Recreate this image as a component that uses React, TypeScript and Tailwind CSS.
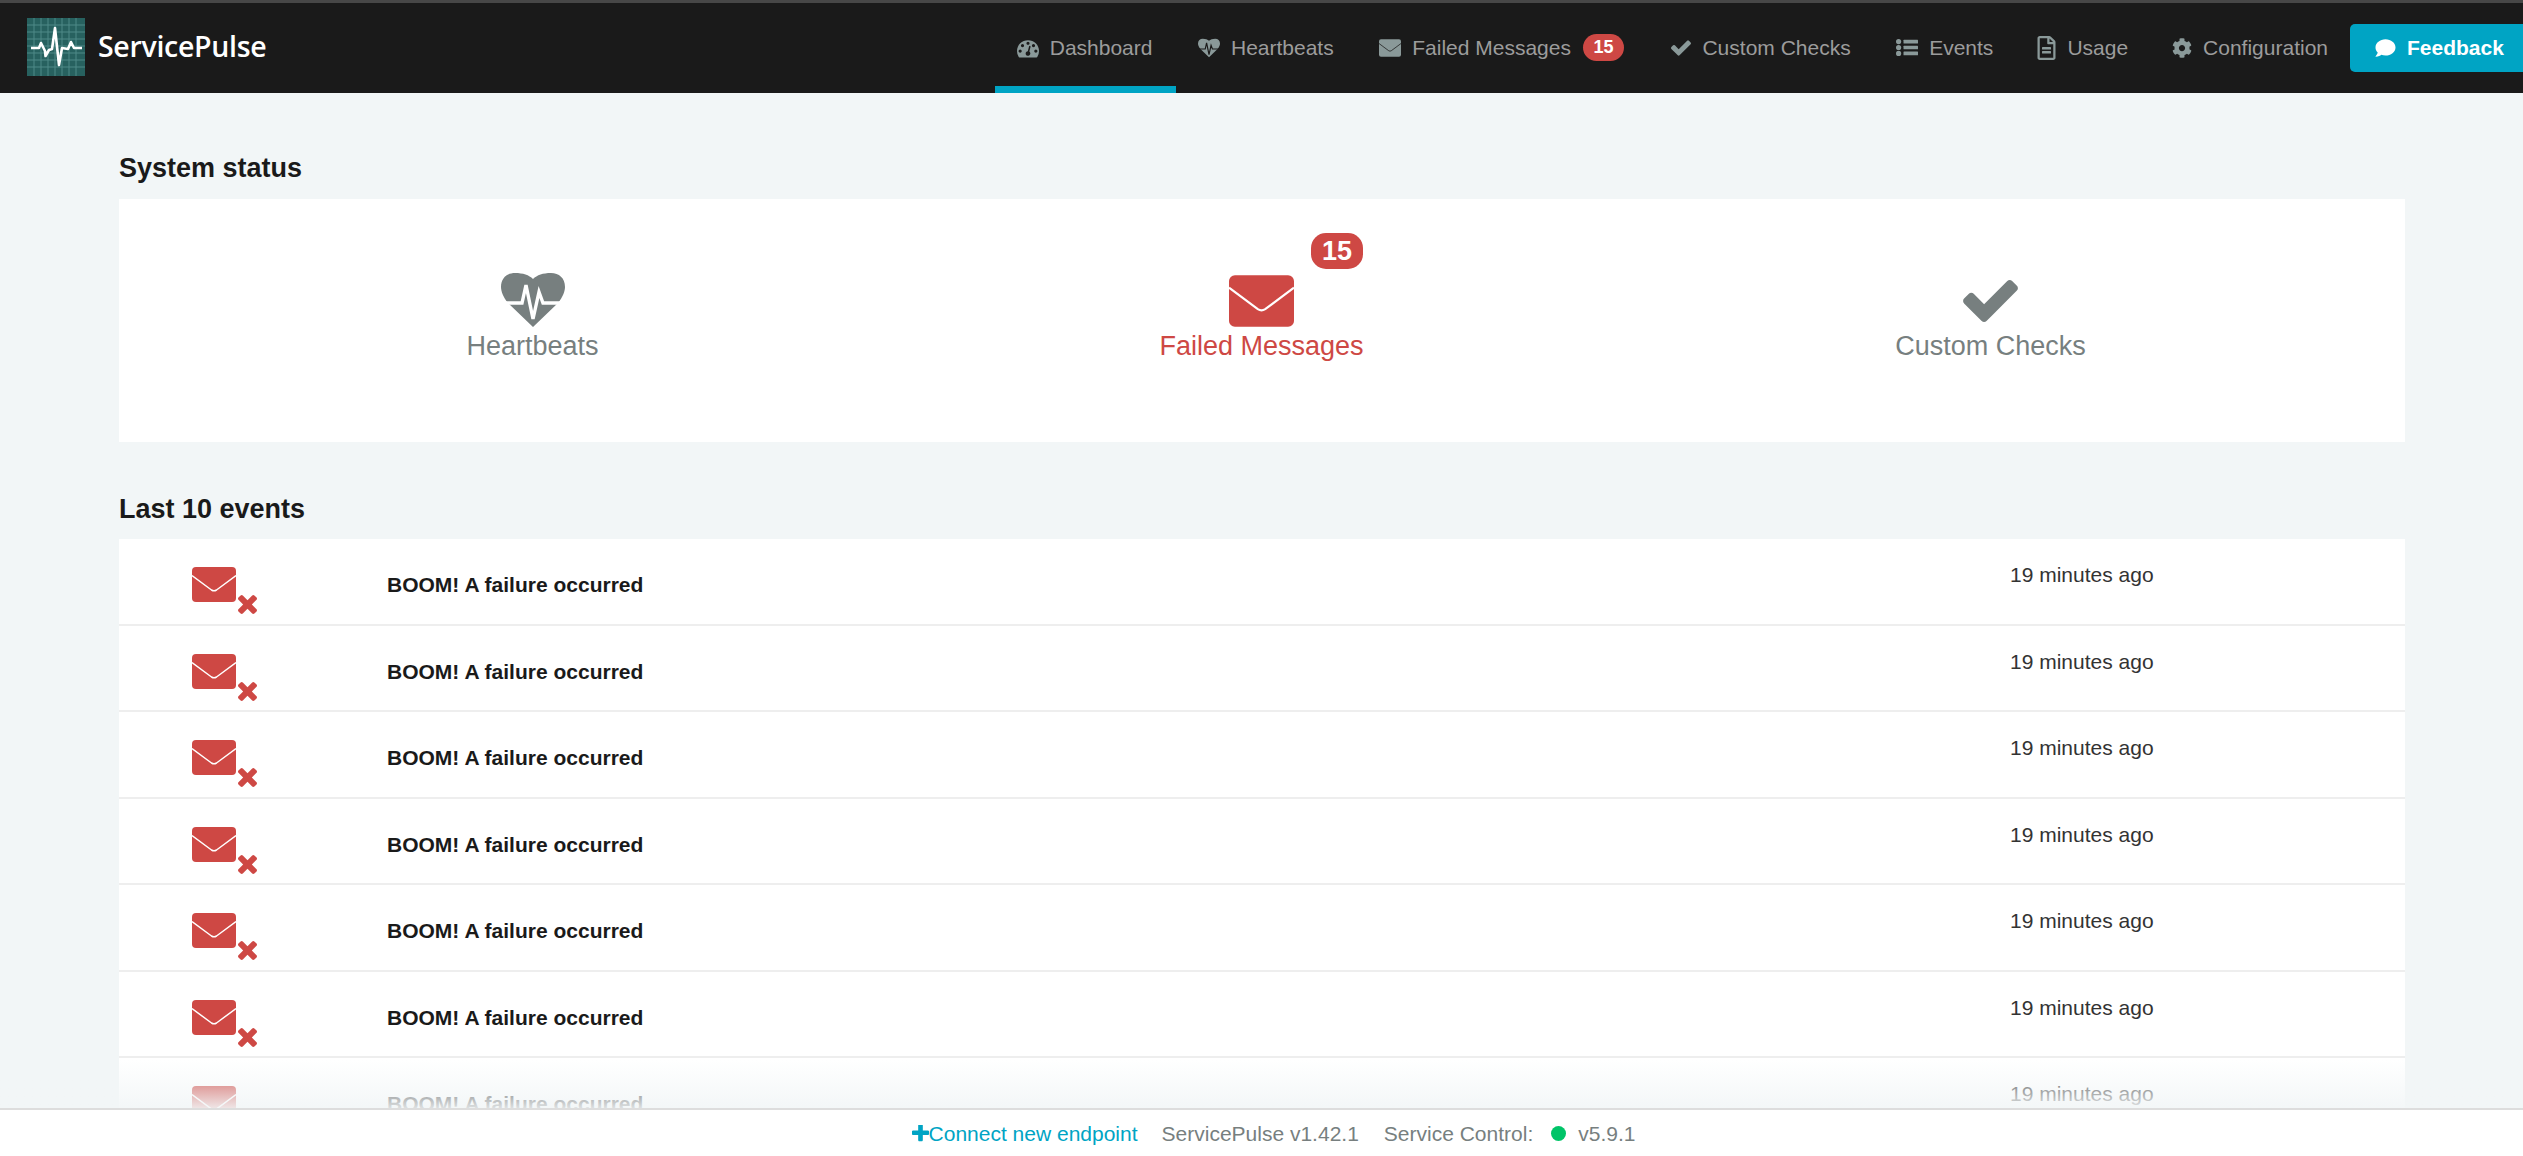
import React from "react";
import { FaRegFileAlt, FaCog, FaComment } from "react-icons/fa";

function Heart({ className, line }: { className?: string; line: string }) {
  return (
    <svg viewBox="0 0 64 54" className={className} fill="currentColor">
      <path d="M32 54 L7 30 C2 24 0 18 0 14 C0 5 6 0 14 0 C22 0 28 2 32 6 C36 2 42 0 50 0 C58 0 64 5 64 14 C64 18 62 24 57 30 Z" />
      <polyline points="0,30 21,30 25,12 32,46 38,19 42,30 64,30" fill="none" stroke={line} strokeWidth="3.4" strokeLinejoin="miter" />
    </svg>
  );
}

function Envelope({ className, line }: { className?: string; line: string }) {
  return (
    <svg viewBox="0 0 44 35" className={className} fill="currentColor">
      <rect x="0" y="0" width="44" height="35" rx="4" />
      <path d="M0 8.5 L19.5 23 Q22 24.6 24.5 23 L44 8.5" fill="none" stroke={line} strokeWidth="1.5" />
    </svg>
  );
}

function Check({ className }: { className?: string }) {
  return (
    <svg viewBox="121 334 1550 1188" className={className} fill="currentColor">
      <path d="M1671 566q0 40-28 68l-724 724-136 136q-28 28-68 28t-68-28l-136-136-362-362q-28-28-28-68t28-68l136-136q28-28 68-28t68 28l294 295 656-657q28-28 68-28t68 28l136 136q28 28 28 68z" />
    </svg>
  );
}

function Cross({ className }: { className?: string }) {
  return (
    <svg viewBox="110 286 1188 1188" className={className} fill="currentColor">
      <path d="M1298 1242q0 40-28 68l-136 136q-28 28-68 28t-68-28l-294-294-294 294q-28 28-68 28t-68-28l-136-136q-28-28-28-68t28-68l294-294-294-294q-28-28-28-68t28-68l136-136q28-28 68-28t68 28l294 294 294-294q28-28 68-28t68 28l136 136q28 28 28 68t-28 68l-294 294 294 294q28 28 28 68z" />
    </svg>
  );
}

function Plus({ className }: { className?: string }) {
  return (
    <svg viewBox="192 192 1408 1408" className={className} fill="currentColor">
      <path d="M1600 736v192q0 40-28 68t-68 28h-416v416q0 40-28 68t-68 28h-192q-40 0-68-28t-28-68v-416h-416q-40 0-68-28t-28-68v-192q0-40 28-68t68-28h416v-416q0-40 28-68t68-28h192q40 0 68 28t28 68v416h416q40 0 68 28t28 68z" />
    </svg>
  );
}

function Gauge({ className }: { className?: string }) {
  return (
    <svg viewBox="0 192 1792 1408" className={className} fill="currentColor">
      <path d="M384 1152q0-53-37.5-90.5t-90.5-37.5-90.5 37.5-37.5 90.5 37.5 90.5 90.5 37.5 90.5-37.5 37.5-90.5zm192-448q0-53-37.5-90.5t-90.5-37.5-90.5 37.5-37.5 90.5 37.5 90.5 90.5 37.5 90.5-37.5 37.5-90.5zm428 481l101-382q6-26-7.5-48.5t-38.5-29.5-48 6.5-30 39.5l-101 382q-60 5-107 43.5t-63 98.5q-20 77 20 146t117 89 146-20 89-117q16-60-6-117t-72-91zm660-33q0-53-37.5-90.5t-90.5-37.5-90.5 37.5-37.5 90.5 37.5 90.5 90.5 37.5 90.5-37.5 37.5-90.5zm-640-640q0-53-37.5-90.5t-90.5-37.5-90.5 37.5-37.5 90.5 37.5 90.5 90.5 37.5 90.5-37.5 37.5-90.5zm448 192q0-53-37.5-90.5t-90.5-37.5-90.5 37.5-37.5 90.5 37.5 90.5 90.5 37.5 90.5-37.5 37.5-90.5zm320 448q0 261-141 483-19 29-54 29h-1402q-35 0-54-29-141-221-141-483 0-182 71-348t191-286 286-191 348-71 348 71 286 191 191 286 71 348z" />
    </svg>
  );
}

function ListIcon({ className }: { className?: string }) {
  return (
    <svg viewBox="0 0 22 17" className={className} fill="currentColor">
      <circle cx="2.6" cy="2.6" r="2.6" />
      <circle cx="2.6" cy="8.5" r="2.6" />
      <circle cx="2.6" cy="14.4" r="2.6" />
      <rect x="7.5" y="0.8" width="14.5" height="3.6" rx="0.5" />
      <rect x="7.5" y="6.7" width="14.5" height="3.6" rx="0.5" />
      <rect x="7.5" y="12.6" width="14.5" height="3.6" rx="0.5" />
    </svg>
  );
}

function Logo() {
  const lines = [7, 14, 21, 28, 35, 42, 49];
  return (
    <svg viewBox="0 0 58 58" className="w-[58px] h-[58px] shrink-0">
      <rect width="58" height="58" fill="#27615f" />
      {lines.map((p) => (
        <g key={p} stroke="#4f8a88" strokeWidth="1">
          <line x1={p} y1="0" x2={p} y2="58" />
          <line x1="0" y1={p} x2="58" y2={p} />
        </g>
      ))}
      <polyline
        points="4,30 12,30 14,25 18,33 18.5,38 22,32 25,31 28,10 32,47 35,30 41,31 44,24 47,30 55,30"
        fill="none"
        stroke="#ffffff"
        strokeWidth="2.6"
        strokeLinejoin="round"
      />
    </svg>
  );
}

const navIcon = "text-[#8a9999]";

function NavItem({ icon, label, active, badge, wide }: { icon: React.ReactNode; label: string; active?: boolean; badge?: string; wide?: boolean }) {
  return (
    <a
      className={
        "h-full flex items-center gap-[11px] pl-[22px] pb-[1px] border-b-[7px] pt-[7px] text-[21px] text-[#9c9c9c] whitespace-nowrap " +
        (wide ? "pr-[23.5px] " : "pr-[22px] ") +
        (active ? "border-[#00a4c4]" : "border-transparent")
      }
    >
      {icon}
      <span>{label}</span>
      {badge && (
        <span className="ml-[1px] mr-[2px] w-[41px] h-[27px] rounded-[14px] bg-[#ce4844] text-white font-bold text-[18px] flex items-center justify-center">
          {badge}
        </span>
      )}
    </a>
  );
}

function StatusCard({ icon, label, red, badge }: { icon: React.ReactNode; label: string; red?: boolean; badge?: string }) {
  return (
    <div className={"relative flex flex-col items-center " + (red ? "text-[#ce4844]" : "text-[#777f7f]")}>
      <div className="h-[57px] flex items-end justify-center">{icon}</div>
      <span className="text-[27px] leading-[38px]">{label}</span>
      {badge && (
        <span className="absolute top-[-37px] left-[414px] w-[52px] h-[36px] rounded-[15px] bg-[#ce4844] text-white font-bold text-[27px] flex items-center justify-center">
          {badge}
        </span>
      )}
    </div>
  );
}

function EventRow() {
  return (
    <div className="flex h-[86.5px] shrink-0 bg-white border-b-2 border-[#eeeeee]">
      <div className="w-[268px] pl-[73px] pt-[28px] shrink-0 relative">
        <Envelope className="w-[44px] h-[35px] text-[#ce4844]" line="#ffffff" />
        <Cross className="absolute left-[119px] top-[56px] w-[19px] h-[19px] text-[#ce4844]" />
      </div>
      <div className="flex-1 pt-[31px] text-[21px] leading-[30px] font-bold text-[#1a1a1a]">BOOM! A failure occurred</div>
      <div className="w-[395px] shrink-0 pt-[21px] text-[21px] leading-[30px] text-[#333333]">19 minutes ago</div>
    </div>
  );
}

export default function App() {
  return (
    <div className="h-screen flex flex-col overflow-hidden bg-[#f2f6f7] font-['Liberation_Sans',Arial,sans-serif]">
      <header className="h-[93px] shrink-0 flex items-stretch bg-[#1a1a1a] border-t-[3px] border-[#474747]">
        <div className="flex items-center pl-[27px] gap-[13px] pb-[3px]">
          <Logo />
          <span className="font-['Open_Sans',sans-serif] font-semibold text-[28.5px] text-white tracking-[-0.3px]">ServicePulse</span>
        </div>
        <nav className="ml-auto flex items-stretch">
          <NavItem wide active label="Dashboard" icon={<Gauge className={"w-[22px] h-[20px] " + navIcon} />} />
          <NavItem wide label="Heartbeats" icon={<Heart className={"w-[22px] h-[20px] " + navIcon} line="#1a1a1a" />} />
          <NavItem wide label="Failed Messages" badge="15" icon={<Envelope className={"w-[22px] h-[18px] " + navIcon} line="#1a1a1a" />} />
          <NavItem wide label="Custom Checks" icon={<Check className={"w-[20px] h-[16px] " + navIcon} />} />
          <NavItem label="Events" icon={<ListIcon className={"w-[22px] h-[17px] " + navIcon} />} />
          <NavItem label="Usage" icon={<FaRegFileAlt className={"w-[19px] h-[24px] " + navIcon} />} />
          <NavItem label="Configuration" icon={<FaCog className={"w-[20px] h-[20px] " + navIcon} />} />
          <div className="flex items-start pt-[21px]">
            <button className="w-[173px] h-[48px] bg-[#00a4c4] rounded-l-[5px] flex items-center gap-[10px] pl-[24px] text-white font-bold text-[21px]">
              <FaComment className="w-[23px] h-[20px]" />
              Feedback
            </button>
          </div>
        </nav>
      </header>

      <main className="flex-1 min-h-0 relative overflow-hidden px-[119px] w-full">
        <div className="w-[2286px]">
          <h2 className="h-[106px] pt-[59px] text-[27px] leading-[32px] font-bold text-[#1a1a1a]">System status</h2>
          <section className="h-[243px] bg-white grid grid-cols-[729px_729px_729px] pl-[49px] pt-[71px]">
            <StatusCard label="Heartbeats" icon={<Heart className="w-[64px] h-[54px]" line="#ffffff" />} />
            <StatusCard red label="Failed Messages" badge="15" icon={<Envelope className="w-[65px] h-[52px]" line="#ffffff" />} />
            <StatusCard label="Custom Checks" icon={<Check className="w-[55px] h-[42px] mb-[5px]" />} />
          </section>
          <h2 className="h-[97px] pt-[51px] text-[27px] leading-[32px] font-bold text-[#1a1a1a]">Last 10 events</h2>
          <section className="flex flex-col">
            {Array.from({ length: 7 }).map((_, i) => (
              <EventRow key={i} />
            ))}
          </section>
        </div>
        <div className="absolute left-0 right-0 bottom-0 h-[48px] bg-gradient-to-b from-[#f2f6f7]/0 to-[#f2f6f7]/90" />
      </main>

      <footer className="h-[48px] shrink-0 bg-white border-t-2 border-[#dddddd] flex items-center justify-center text-[21px] text-[#777f7f] pt-[1px] pl-[24px]">
        <a className="flex items-center text-[#00a4c4]">
          <Plus className="w-[17px] h-[17px]" />
          Connect new endpoint
        </a>
        <span className="ml-[24px]">ServicePulse v1.42.1</span>
        <span className="ml-[25px]">Service Control:</span>
        <span className="ml-[18px] w-[15px] h-[15px] rounded-full bg-[#00c468]" />
        <span className="ml-[12px]">v5.9.1</span>
      </footer>
    </div>
  );
}
